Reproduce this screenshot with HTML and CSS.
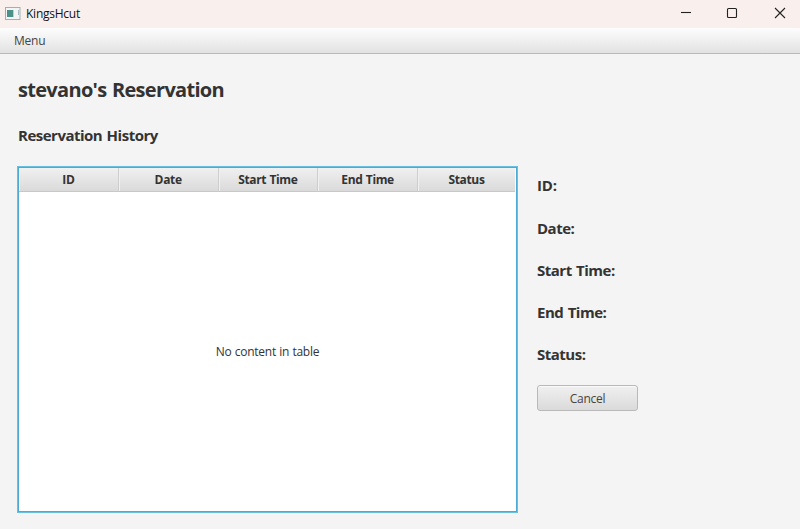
FILE: index.html
```html
<!DOCTYPE html>
<html lang="en"><head><meta charset="utf-8"><title>KingsHcut</title><link rel="stylesheet" href="styles.css"></head>
<body>
<header class="titlebar">
<svg class="app-icon" width="16" height="13" viewBox="0 0 16 13"><rect x=".5" y=".5" width="14.500" height="12" fill="#f3f5f5" stroke="#a9adad"/><rect x="2" y="3" width="6" height="7" fill="#4b9187"/><path d="M8.500 3v7" stroke="#b5d2dd"/><path d="M13.500 3v5" stroke="#a4bcc0"/></svg>
<span class="app-name">KingsHcut</span>
<div class="controls">
<svg width="10" height="10" viewBox="0 0 10 10"><path d="M0 4.500h10"/></svg>
<svg width="10" height="10" viewBox="0 0 10 10"><rect x=".5" y=".5" width="9" height="9" rx="1"/></svg>
<svg width="10" height="10" viewBox="0 0 10 10"><path d="M0 0l10 10M10 0L0 10"/></svg>
</div>
</header>
<nav class="menubar"><span class="menu">Menu</span></nav>
<main>
<h1>stevano's Reservation</h1>
<h2>Reservation History</h2>
<div class="content">
<section class="table">
<div class="thead"><span>ID</span><span>Date</span><span>Start Time</span><span>End Time</span><span>Status</span></div>
<div class="empty">No content in table</div>
</section>
<aside class="details">
<div class="field">ID:</div><div class="field">Date:</div><div class="field">Start Time:</div><div class="field">End Time:</div><div class="field">Status:</div>
<button>Cancel</button>
</aside>
</div>
</main>
</body></html>
```

FILE: styles.css
```css
*{box-sizing:border-box}
body{margin:0;width:800px;height:529px;overflow:hidden;display:flex;flex-direction:column;background:#f4f4f4;color:#333;font:12px "Open Sans","Noto Sans",sans-serif;letter-spacing:-.25px}
.titlebar{height:28px;background:#f9f0ee;display:flex;align-items:center;padding:0 15px 2px 5px;color:#111}
.app-name{margin-left:5px;font-size:12px;letter-spacing:-.25px}
.controls{margin-left:auto;display:flex;gap:37px}
.controls svg{fill:none;stroke:#222;stroke-width:1.1;overflow:visible}
.controls svg:nth-child(2){margin:0 1px 0 -1px}
.menubar{height:26px;background:linear-gradient(#fdfdfd,#e2e2e2);border-bottom:1px solid #b9b9b9;display:flex;align-items:center;padding:0 0 0 14px;color:#444}
main{padding:22px 17px 0 18px;flex:1}
h1{margin:0;font-size:20px;line-height:28px;height:28px;letter-spacing:-.69px;word-spacing:1px}
h2{margin:21px 0 0;font-size:15px;line-height:20px;letter-spacing:-.5px;word-spacing:1px}
.content{display:flex;margin:21px 0 0 -1px}
.table{width:501px;height:347px;border:1px solid #68c0e0;box-shadow:inset 0 0 0 1px #4cabd2;padding:1px;background:#fff;display:flex;flex-direction:column}
.thead{height:24px;margin-right:1px;background:linear-gradient(#f0f0f0,#dadada);border-bottom:1px solid #c8c8c8;display:grid;grid-template-columns:repeat(4,99.75px) 1fr;font-weight:700;line-height:23px;text-align:center;letter-spacing:-.35px;word-spacing:.5px}
.thead span{border-right:1px solid #cecece;box-shadow:inset 1px 1px #f0f0f0}
.thead span:last-child{border-right:0}
.empty{flex:1;display:flex;align-items:center;justify-content:center;word-spacing:.4px}
.details{margin-left:19px;display:flex;flex-direction:column}
.field{height:42px;line-height:41px;font-size:15px;font-weight:700;letter-spacing:-.5px;word-spacing:1px}
.field:first-child{line-height:39px;letter-spacing:-.2px}
button{margin-top:9px;width:101px;height:26px;border:1px solid #b9b9b9;border-radius:3px;background:linear-gradient(#f0f0f0,#dadada);box-shadow:inset 0 1px #fafafa;font:inherit;letter-spacing:inherit;color:#444;padding:0}
```
